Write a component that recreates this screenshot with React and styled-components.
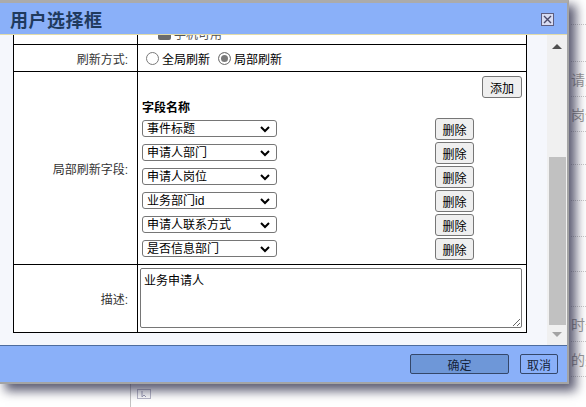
import React, { useLayoutEffect, useRef } from 'react';
import styled, { createGlobalStyle } from 'styled-components';

const GlobalStyle = createGlobalStyle`
  html, body {
    margin: 0;
    padding: 0;
    background: #fff;
  }
  body {
    font-family: "Liberation Sans", "Noto Sans CJK SC", sans-serif;
  }
`;

const Desk = styled.div`
  position: relative;
  width: 586px;
  height: 407px;
  overflow: hidden;
  background: #fff;
`;

/* page underneath the dialog */
const Backdrop = styled.div`
  display: flex;
  flex-direction: column;
`;

const BackTop = styled.div`
  height: 384px;
  padding-left: 571px;
`;

const BackRow = styled.div`
  height: ${(p) => p.$h}px;
  box-sizing: border-box;
  border-bottom: 1px dotted #c8c8c8;
  display: flex;
  align-items: center;
  font-size: 14px;
  color: #9a9a9a;
  white-space: nowrap;
`;

const BackBottom = styled.div`
  display: flex;
  height: 23px;
  padding-left: 130px;
`;

const BackDivider = styled.div`
  width: 1px;
  background: #c4c4c4;
`;

const BackIcon = styled.svg`
  margin: 5px 0 0 6px;
`;

const Dialog = styled.div`
  position: absolute;
  top: 0;
  left: 0;
  width: 569px;
  height: 384px;
  box-sizing: border-box;
  border-top: 3px solid #ababab;
  border-right: 2px solid #a4a4a4;
  border-bottom: 2px solid #a4a4a4;
  display: flex;
  flex-direction: column;
  background: #f5f7fc;
  box-shadow: 6px 6px 10px 1px rgba(40, 40, 70, 0.75);
`;

const TitleBar = styled.div`
  height: 31px;
  flex: none;
  display: flex;
  align-items: center;
  justify-content: space-between;
  padding: 0 13px 0 10px;
  background: #8ab0f9;
  border-bottom: 1px solid #e2dcaa;
  position: relative;
  z-index: 1;
`;

const Title = styled.div`
  font-size: 18px;
  font-weight: bold;
  letter-spacing: 0.5px;
  color: #1f3a5e;
`;

const CloseButton = styled.svg`
  display: block;
  margin-top: 1px;
`;

const Body = styled.div`
  height: 310px;
  flex: none;
  display: flex;
`;

const Viewport = styled.div`
  flex: 1;
  overflow: hidden;
`;

const Sheet = styled.div`
  padding: 12px 20px 12px 13px;
`;

const FormTable = styled.table`
  width: 514px;
  border-collapse: collapse;
  table-layout: fixed;
  background: #fff;
`;

const LabelCell = styled.td`
  border: 1px solid #000;
  text-align: right;
  vertical-align: middle;
  padding: 0 9px 0 0;
  font-size: 12px;
  color: #333;
  white-space: nowrap;
`;

const ValueCell = styled.td`
  border: 1px solid #000;
  vertical-align: ${(p) => p.$valign || 'middle'};
  padding: ${(p) => p.$pad || '0'};
  height: ${(p) => (p.$h ? `${p.$h}px` : 'auto')};
  font-size: 12px;
  color: #000;
`;

const Inline = styled.div`
  display: flex;
  align-items: center;
  height: 22px;
  padding-left: ${(p) => p.$indent || 0}px;
`;

const Radio = styled.input`
  appearance: none;
  width: 13px;
  height: 13px;
  margin: 0 3px 0 0;
  box-sizing: border-box;
  border: 1px solid #7a7a7a;
  border-radius: 50%;
  background: #fff;

  &:checked {
    background: #7a7a7a;
    box-shadow: inset 0 0 0 2px #fff;
  }
`;

const Check = styled.input`
  appearance: none;
  width: 13px;
  height: 13px;
  margin: 0 3px 0 0;
  box-sizing: border-box;
  border-radius: 2px;
  background: #6b6b6b;
`;

const OptionText = styled.span`
  margin-right: 8px;
  color: ${(p) => (p.$muted ? '#555' : '#000')};
`;

const TextInput = styled.input`
  width: 200px;
  height: 18px;
  box-sizing: border-box;
  border: 1px solid #767676;
  border-radius: 2px;
  font: inherit;
  padding: 0 4px;
`;

const AddRow = styled.div`
  display: flex;
  justify-content: flex-end;
`;

const Button = styled.button`
  height: 22px;
  width: ${(p) => p.$w || 39}px;
  box-sizing: border-box;
  padding: 0;
  border: 1px solid #767676;
  border-radius: 3px;
  background: #efefef;
  font-family: inherit;
  font-size: 12px;
  color: #000;
`;

const FieldHead = styled.div`
  margin-top: 2px;
  line-height: 16px;
  font-weight: bold;
  font-size: 12px;
`;

const FieldGrid = styled.div`
  display: grid;
  grid-template-columns: 293px 39px;
  grid-auto-rows: 24px;
  margin-top: 2px;
`;

const SelectWrap = styled.div`
  position: relative;
  width: ${(p) => p.$w || 135}px;
  height: 17px;
  margin-top: 2px;
`;

const Select = styled.select`
  appearance: none;
  display: block;
  width: 100%;
  height: 100%;
  box-sizing: border-box;
  border: 1px solid #767676;
  border-radius: 3px;
  padding: 0 18px 0 4px;
  background: #fff;
  font-family: inherit;
  font-size: 12px;
  color: #000;
`;

const Chevron = styled.svg`
  position: absolute;
  right: 7px;
  top: 6px;
  pointer-events: none;
`;

const Textarea = styled.textarea`
  display: block;
  width: 382px;
  height: 60px;
  box-sizing: border-box;
  border: 1px solid #767676;
  border-radius: 2px;
  padding: 2px 3px;
  font-family: inherit;
  font-size: 12px;
  color: #000;
  resize: both;
`;

const Scrollbar = styled.div`
  width: 20px;
  flex: none;
  display: flex;
  flex-direction: column;
  background: #f0f0f0;
`;

const ArrowBox = styled.div`
  height: 20px;
  flex: none;
  display: flex;
  justify-content: center;
  align-items: ${(p) => (p.$down ? 'flex-start' : 'flex-end')};
  padding: ${(p) => (p.$down ? '7px 0 0' : '0 0 6px')};
  box-sizing: border-box;
`;

const Arrow = styled.div`
  width: 0;
  height: 0;
  border-left: 5px solid transparent;
  border-right: 5px solid transparent;
  ${(p) =>
    p.$down
      ? 'border-top: 5px solid #a3a3a3;'
      : 'border-bottom: 5px solid #505050;'}
`;

const Track = styled.div`
  flex: 1;
  display: flex;
  flex-direction: column;
  justify-content: flex-end;
  padding: 0 1px 0 2px;
`;

const Thumb = styled.div`
  height: 168px;
  background: #c1c1c1;
`;

const Footer = styled.div`
  height: 36px;
  flex: none;
  display: flex;
  justify-content: flex-end;
  align-items: center;
  gap: 11px;
  padding-right: 9px;
  background: #8ab0f9;
  border-top: 1px solid #4d6c9e;
`;

const FooterButton = styled.button`
  height: 20px;
  width: ${(p) => p.$w}px;
  box-sizing: border-box;
  padding: 0;
  border: 1px solid #34476a;
  border-radius: 2px;
  background: ${(p) => (p.$primary ? '#6e97d8' : '#8ab0f9')};
  font-family: inherit;
  font-size: 12px;
  color: #14233a;
`;

const fields = ['事件标题', '申请人部门', '申请人岗位', '业务部门id', '申请人联系方式', '是否信息部门'];

const backRows = [
  { h: 25 },
  { h: 37 },
  { h: 35, text: '请人' },
  { h: 35, text: '岗位' },
  { h: 33 },
  { h: 36 },
  { h: 36 },
  { h: 35 },
  { h: 35 },
  { h: 35, text: '时长' },
  { h: 35, text: '的处' },
];

const FieldSelect = ({ value, options, width }) => (
  <SelectWrap $w={width}>
    <Select defaultValue={value}>
      {options.map((o) => (
        <option key={o}>{o}</option>
      ))}
    </Select>
    <Chevron width="10" height="7" viewBox="0 0 10 7">
      <polyline points="1,1 5,5 9,1" fill="none" stroke="#000" strokeWidth="2" />
    </Chevron>
  </SelectWrap>
);

const App = () => {
  const viewRef = useRef(null);

  // the form is shown scrolled to its end
  useLayoutEffect(() => {
    const el = viewRef.current;
    if (el) el.scrollTop = el.scrollHeight;
  }, []);

  return (
    <>
      <GlobalStyle />
      <Desk>
        <Backdrop>
          <BackTop>
            {backRows.map((r, i) => (
              <BackRow key={i} $h={r.h}>
                {r.text}
              </BackRow>
            ))}
          </BackTop>
          <BackBottom>
            <BackDivider />
            <BackIcon width="14" height="10" viewBox="0 0 14 10">
              <rect x="0.5" y="0.5" width="13" height="9" fill="none" stroke="#b8b8c8" />
              <path d="M5 2 L5 8 L7 6 L9 8" fill="none" stroke="#a0a0b8" />
            </BackIcon>
          </BackBottom>
        </Backdrop>

        <Dialog>
          <TitleBar>
            <Title>用户选择框</Title>
            <CloseButton width="13" height="13" viewBox="0 0 13 13">
              <rect x="0.5" y="0.5" width="12" height="12" fill="#d8dcf2" stroke="#5e5e80" />
              <path d="M3 3 L10 10 M10 3 L3 10" stroke="#4a4a6a" strokeWidth="1.4" />
            </CloseButton>
          </TitleBar>

          <Body>
            <Viewport ref={viewRef}>
              <Sheet>
                <FormTable>
                  <colgroup>
                    <col style={{ width: 124 }} />
                    <col />
                  </colgroup>
                  <tbody>
                    <tr>
                      <LabelCell>字段编码:</LabelCell>
                      <ValueCell $pad="4px 4px" $h={26}>
                        <TextInput defaultValue="applicant" readOnly />
                      </ValueCell>
                    </tr>
                    <tr>
                      <LabelCell>字段类型:</LabelCell>
                      <ValueCell $pad="0 4px" $h={26}>
                        <FieldSelect value="用户选择" options={['用户选择', '部门选择', '文本']} width={135} />
                      </ValueCell>
                    </tr>
                    <tr>
                      <LabelCell>是否可用:</LabelCell>
                      <ValueCell $pad="0">
                        <Inline $indent={20}>
                          <Check type="checkbox" checked disabled readOnly />
                          <OptionText $muted>PC可用</OptionText>
                        </Inline>
                        <Inline $indent={20}>
                          <Check type="checkbox" checked disabled readOnly />
                          <OptionText $muted>手机可用</OptionText>
                        </Inline>
                      </ValueCell>
                    </tr>
                    <tr>
                      <LabelCell>刷新方式:</LabelCell>
                      <ValueCell $h={26}>
                        <Inline $indent={8}>
                          <Radio type="radio" name="refresh" disabled readOnly />
                          <OptionText>全局刷新</OptionText>
                          <Radio type="radio" name="refresh" checked disabled readOnly />
                          <OptionText>局部刷新</OptionText>
                        </Inline>
                      </ValueCell>
                    </tr>
                    <tr>
                      <LabelCell>局部刷新字段:</LabelCell>
                      <ValueCell $valign="top" $pad="4px 4px 2px 4px">
                        <AddRow>
                          <Button $w={40}>添加</Button>
                        </AddRow>
                        <FieldHead>字段名称</FieldHead>
                        <FieldGrid>
                          {fields.map((f) => (
                            <React.Fragment key={f}>
                              <FieldSelect value={f} options={fields} />
                              <Button>删除</Button>
                            </React.Fragment>
                          ))}
                        </FieldGrid>
                      </ValueCell>
                    </tr>
                    <tr>
                      <LabelCell>描述:</LabelCell>
                      <ValueCell $valign="top" $pad="3px 5px 4px 2px">
                        <Textarea defaultValue="业务申请人" />
                      </ValueCell>
                    </tr>
                  </tbody>
                </FormTable>
              </Sheet>
            </Viewport>
            <Scrollbar>
              <ArrowBox>
                <Arrow />
              </ArrowBox>
              <Track>
                <Thumb />
              </Track>
              <ArrowBox $down>
                <Arrow $down />
              </ArrowBox>
            </Scrollbar>
          </Body>

          <Footer>
            <FooterButton $primary $w={99}>确定</FooterButton>
            <FooterButton $w={38}>取消</FooterButton>
          </Footer>
        </Dialog>
      </Desk>
    </>
  );
};

export default App;
